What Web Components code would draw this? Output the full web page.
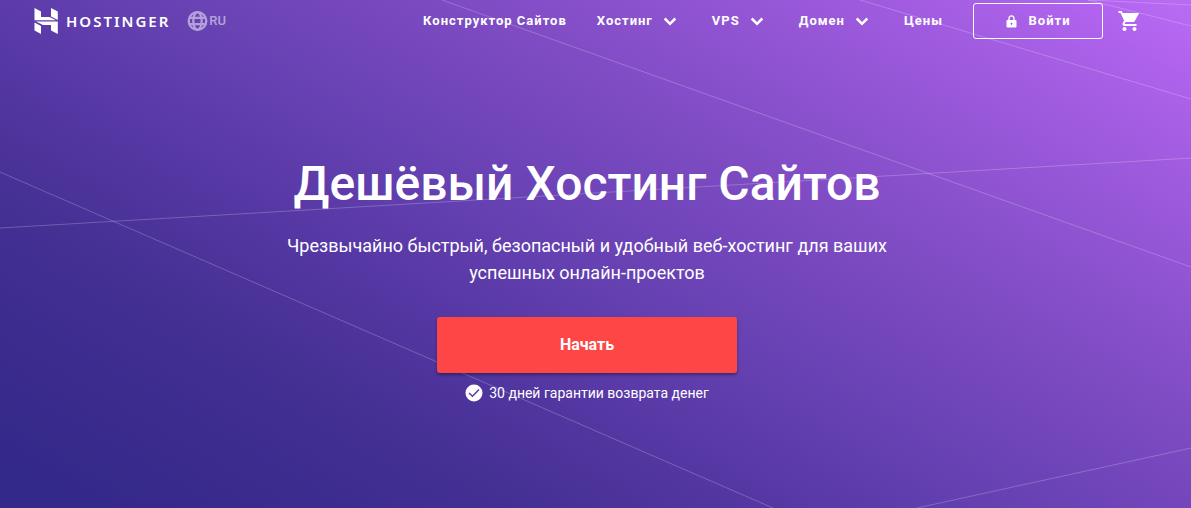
<!DOCTYPE html>
<html lang="ru">
<head>
<meta charset="utf-8">
<meta name="viewport" content="width=device-width, initial-scale=1">
<title>Дешёвый Хостинг Сайтов</title>
<style>
body { margin: 0; font-family: Roboto, "Noto Sans", sans-serif; color: #fff; background: #33298a; }
</style>
</head>
<body>
<landing-page>
  <site-header slot="header">
    <brand-logo></brand-logo>
    <language-picker>RU</language-picker>
    <nav-item slot="nav">Конструктор Сайтов</nav-item>
    <nav-item slot="nav" menu>Хостинг</nav-item>
    <nav-item slot="nav" menu>VPS</nav-item>
    <nav-item slot="nav" menu>Домен</nav-item>
    <nav-item slot="nav">Цены</nav-item>
    <login-button slot="actions">Войти</login-button>
    <cart-link slot="actions"></cart-link>
  </site-header>
  <hero-banner>
    <span slot="title">Дешёвый Хостинг Сайтов</span>
    <span slot="lead">Чрезвычайно быстрый, безопасный и удобный веб-хостинг для ваших успешных онлайн-проектов</span>
    <start-button slot="action">Начать</start-button>
    <guarantee-note slot="note">30 дней гарантии возврата денег</guarantee-note>
  </hero-banner>
</landing-page>
<script>
const define = (name, html) => customElements.define(name, class extends HTMLElement {
  constructor() {
    super();
    this.attachShadow({ mode: "open" }).innerHTML = html;
  }
});

define("landing-page", `
<style>
  :host { display: grid; min-height: 100vh;
          background: linear-gradient(30deg, #33298a 4%, #3a2b8d 13%, #453094 26%, #5638a4 38%, #6641b2 49%, #7d4bc2 64%, #a35de2 87%, #b264ef 95%, #b96cf3 100%); }
  svg { grid-area: 1 / 1; width: 100%; height: 100%; min-height: 0; contain: size; }
  path { fill: none; stroke: #fff; stroke-opacity: .22; vector-effect: non-scaling-stroke; }
  .content { grid-area: 1 / 1; z-index: 1; padding-right: 17px; }
</style>
<svg viewBox="0 0 1191 508" preserveAspectRatio="none" aria-hidden="true">
  <path d="M0 172L773 508M0 228L1191 158M442 0L1191 267M860 0L1191 99M1088 0L1191 26M1088 0L1191 5M917 508L1191 448"/>
</svg>
<div class="content"><slot name="header"></slot><main><slot></slot></main></div>`);

define("site-header", `
<style>
  :host { display: block; }
  header { display: flex; align-items: center; height: 42px; padding: 0 34px; }
  .brand { display: flex; align-items: center; gap: 17px; flex: 1; }
  nav { display: flex; align-items: center; gap: 30px; }
  .actions { display: flex; align-items: center; gap: 15px; margin-left: 30px; }
</style>
<header>
  <div class="brand"><slot></slot></div>
  <nav><slot name="nav"></slot></nav>
  <div class="actions"><slot name="actions"></slot></div>
</header>`);

define("brand-logo", `
<style>
  :host { display: block; }
  a { display: flex; align-items: center; gap: 8px; color: inherit; text-decoration: none;
      font: 600 15px/24px "Noto Sans", sans-serif; letter-spacing: 2px; }
  svg { display: block; fill: currentColor; }
</style>
<a href="#" aria-label="HOSTINGER">
  <svg width="24" height="26" viewBox="0 0 24 26" aria-hidden="true">
    <path d="M.5 0L7 3.500V9H15.500L22 12.200H.5ZM17 0L23.800 3.500V12L17 8.600ZM.5 14.500L7 18V26L.5 22.500ZM2 13.500H23.800V26L17 22.500V17H9Z"/>
  </svg>
  <span>HOSTINGER</span>
</a>`);

define("language-picker", `
<style>
  :host { display: block; }
  button { display: flex; align-items: center; gap: 1px; padding: 0; border: 0; background: none;
           color: inherit; opacity: .5; font: 500 13px/20px Roboto, sans-serif; }
  svg { display: block; fill: none; stroke: currentColor; stroke-width: 2.300; }
</style>
<button type="button" aria-label="RU">
  <svg width="21" height="20" viewBox="0 0 21 20" aria-hidden="true">
    <circle cx="10.5" cy="10" r="8.800"/><ellipse cx="10.5" cy="10" rx="4.200" ry="8.800"/>
    <path d="M2.500 6.800H18.500M2.500 13.200H18.500"/>
  </svg>
  <slot></slot>
</button>`);

define("nav-item", `
<style>
  :host { display: block; }
  :host([menu]) { padding-right: 5px; }
  a { display: flex; align-items: center; gap: 10px; color: inherit; text-decoration: none;
      font-size: 13px; font-weight: 700; line-height: 20px; letter-spacing: 1px; }
  svg { display: none; fill: none; stroke: currentColor; stroke-width: 2.500; }
  :host([menu]) svg { display: block; }
</style>
<a href="#"><slot></slot><svg width="14" height="9" viewBox="0 0 14 9" aria-hidden="true"><path d="M1.700 1.500L7 6.800L12.300 1.500"/></svg></a>`);

define("login-button", `
<style>
  :host { display: block; }
  button { display: flex; align-items: center; justify-content: center; gap: 12px; width: 130px; height: 36px; padding: 0;
           border: 1px solid #fff; border-radius: 3px; background: none; color: inherit;
           font: 700 13px/20px Roboto, sans-serif; letter-spacing: 1px; }
  svg { display: block; fill: currentColor; }
</style>
<button type="button">
  <svg width="11" height="13" viewBox="0 0 11 13" aria-hidden="true">
    <path fill-rule="evenodd" d="M2.300 5V3.600C2.300 1.500 3.700.3 5.500.3S8.700 1.500 8.700 3.600V5H9.500Q10.500 5 10.500 6V11.500Q10.500 12.500 9.500 12.500H1.500Q.5 12.500 .5 11.500V6Q.5 5 1.500 5ZM3.700 5H7.300V3.600C7.300 2.300 6.500 1.600 5.500 1.600S3.700 2.300 3.700 3.600ZM4.500 8.200L5.200 10H5.800L6.500 8.200Q5.500 7 4.500 8.200Z"/>
  </svg>
  <slot></slot>
</button>`);

define("cart-link", `
<style>
  :host { display: block; }
  a { display: block; color: inherit; }
  svg { display: block; fill: currentColor; }
</style>
<a href="#" aria-label="Корзина">
  <svg width="22" height="20" viewBox="1 2 21 20" aria-hidden="true">
    <path d="M7 18c-1.100 0-1.990.9-1.990 2S5.900 22 7 22s2-.9 2-2-.9-2-2-2zM1 2v2h2l3.600 7.590-1.350 2.450c-.16.28-.25.61-.25.96 0 1.100.9 2 2 2h12v-2H7.420c-.14 0-.25-.11-.25-.25l.03-.12.9-1.630h7.450c.75 0 1.410-.41 1.750-1.030L21.700 4H5.210l-.94-2H1zm16 16c-1.100 0-1.990.9-1.990 2s.89 2 1.990 2 2-.9 2-2-.9-2-2-2z"/>
  </svg>
</a>`);

define("hero-banner", `
<style>
  :host { display: block; }
  section { display: flex; flex-direction: column; align-items: center; padding: 110px 16px 32px; text-align: center; }
  h1 { margin: 0; font-size: 48px; font-weight: 500; line-height: 64px; }
  p { max-width: 620px; margin: 16px 0 31px; font-size: 18px; line-height: 27px; }
</style>
<section>
  <h1><slot name="title"></slot></h1>
  <p><slot name="lead"></slot></p>
  <slot name="action"></slot>
  <slot name="note"></slot>
</section>`);

define("start-button", `
<style>
  :host { display: block; width: 300px; max-width: 100%; }
  button { width: 100%; height: 56px; border: 0; border-radius: 3px; background: #ff4646; color: inherit;
           font: 700 16px/24px Roboto, sans-serif; box-shadow: 0 2px 3px rgba(0, 0, 0, .35); }
</style>
<button type="button"><slot></slot></button>`);

define("guarantee-note", `
<style>
  :host { display: flex; align-items: center; gap: 6px; margin-top: 10px; font-size: 14px; line-height: 20px; }
  svg { display: block; }
</style>
<svg width="18" height="18" viewBox="0 0 18 18" aria-hidden="true">
  <circle cx="9" cy="9" r="8.500" fill="#fff"/><path d="M4 9L7.500 12.200L14 5.500" fill="none" stroke="#5a38a5" stroke-width="1.500"/>
</svg>
<slot></slot>`);

</script>
</body>
</html>
